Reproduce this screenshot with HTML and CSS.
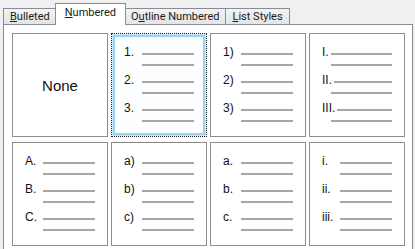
FILE: index.html
```html
<!DOCTYPE html>
<html lang="en">
<head>
  <meta charset="UTF-8">
  <title>Bullets and Numbering</title>
  <link rel="stylesheet" href="styles.css">
</head>
<body>
  <!-- Tab strip -->
  <div class="tabs">
    <div class="tab"><u>B</u>ulleted</div>
    <div class="tab active"><u>N</u>umbered</div>
    <div class="tab">O<u>u</u>tline Numbered</div>
    <div class="tab"><u>L</u>ist Styles</div>
  </div>

  <!-- Numbering gallery -->
  <div class="panel">
    <div class="gallery">
      <div class="cell none">None</div>

      <div class="cell selected">
        <div class="item"><div class="head"><span class="num">1.</span><span class="line"></span></div><span class="line sub"></span></div>
        <div class="item"><div class="head"><span class="num">2.</span><span class="line"></span></div><span class="line sub"></span></div>
        <div class="item"><div class="head"><span class="num">3.</span><span class="line"></span></div><span class="line sub"></span></div>
      </div>

      <div class="cell">
        <div class="item"><div class="head"><span class="num">1)</span><span class="line"></span></div><span class="line sub"></span></div>
        <div class="item"><div class="head"><span class="num">2)</span><span class="line"></span></div><span class="line sub"></span></div>
        <div class="item"><div class="head"><span class="num">3)</span><span class="line"></span></div><span class="line sub"></span></div>
      </div>

      <div class="cell tight">
        <div class="item"><div class="head"><span class="num">I.</span><span class="line"></span></div><span class="line sub"></span></div>
        <div class="item"><div class="head"><span class="num">II.</span><span class="line"></span></div><span class="line sub"></span></div>
        <div class="item"><div class="head"><span class="num">III.</span><span class="line"></span></div><span class="line sub"></span></div>
      </div>

      <div class="cell">
        <div class="item"><div class="head"><span class="num">A.</span><span class="line"></span></div><span class="line sub"></span></div>
        <div class="item"><div class="head"><span class="num">B.</span><span class="line"></span></div><span class="line sub"></span></div>
        <div class="item"><div class="head"><span class="num">C.</span><span class="line"></span></div><span class="line sub"></span></div>
      </div>

      <div class="cell">
        <div class="item"><div class="head"><span class="num">a)</span><span class="line"></span></div><span class="line sub"></span></div>
        <div class="item"><div class="head"><span class="num">b)</span><span class="line"></span></div><span class="line sub"></span></div>
        <div class="item"><div class="head"><span class="num">c)</span><span class="line"></span></div><span class="line sub"></span></div>
      </div>

      <div class="cell">
        <div class="item"><div class="head"><span class="num">a.</span><span class="line"></span></div><span class="line sub"></span></div>
        <div class="item"><div class="head"><span class="num">b.</span><span class="line"></span></div><span class="line sub"></span></div>
        <div class="item"><div class="head"><span class="num">c.</span><span class="line"></span></div><span class="line sub"></span></div>
      </div>

      <div class="cell">
        <div class="item"><div class="head"><span class="num">i.</span><span class="line"></span></div><span class="line sub"></span></div>
        <div class="item"><div class="head"><span class="num">ii.</span><span class="line"></span></div><span class="line sub"></span></div>
        <div class="item"><div class="head"><span class="num">iii.</span><span class="line"></span></div><span class="line sub"></span></div>
      </div>
    </div>
  </div>
</body>
</html>
```

FILE: styles.css
```css
/* General */
* {
  box-sizing: border-box;
}

body {
  margin: 0;
  background: #f0f0f0;
  font-family: Roboto, "Liberation Sans", sans-serif;
  font-size: 11px;
  color: #000;
}

/* Tabs */
.tabs {
  display: flex;
  align-items: flex-end;
  height: 24px;
  padding-left: 3px;
}

.tab {
  position: relative;
  height: 16px;
  line-height: 15px;
  padding: 0 6px;
  margin-right: -1px;
  border: 1px solid #898c95;
  border-bottom: none;
  background: linear-gradient(#f3f3f3, #e4e4e4);
  color: #1a1a1a;
  white-space: nowrap;
}

.tab.active {
  z-index: 1;
  height: 22px;
  line-height: 17px;
  padding: 0 9px;
  margin: 0 -2px -1px -1px;
  background: #fff;
}

.tab u {
  text-decoration-thickness: 1px;
  text-underline-offset: 1px;
}

/* Panel */
.panel {
  width: 410px;
  height: 225px;
  margin-left: 3px;
  padding: 8px 0 0 8px;
  border: 1px solid #898c95;
  border-bottom: none;
  background: #fff;
}

.gallery {
  display: grid;
  grid-template-columns: repeat(4, 96px);
  grid-auto-rows: 104px;
  column-gap: 3px;
  row-gap: 5px;
}

.cell {
  padding: 12px 12px 0 12px;
  border: 1px solid #8e8e8e;
  background: #fff;
  font-family: "Liberation Sans", Arial, sans-serif;
  font-size: 12px;
  color: #111;
}

.cell.none {
  display: flex;
  align-items: center;
  justify-content: center;
  padding: 0;
  font-size: 15px;
}

.cell.selected {
  border: 1px dotted #1a1a1a;
  box-shadow: inset 0 0 0 1px #c9e9fb, inset 0 0 0 3px #98d3f3;
  background: #fdfeff;
}

/* Numbered items */
.item {
  height: 28px;
}

.head {
  display: flex;
  height: 13px;
  line-height: 13px;
}

.num {
  width: 18px;
  flex: none;
}

.line {
  display: block;
  height: 2px;
  background: #a6a6a6;
}

.head .line {
  flex: 1;
  margin-top: 7px;
}

.line.sub {
  margin: 5px 0 0 18px;
}

.tight .num {
  width: auto;
  margin-right: 2px;
}

.tight .line.sub {
  margin-left: 9px;
}
```
